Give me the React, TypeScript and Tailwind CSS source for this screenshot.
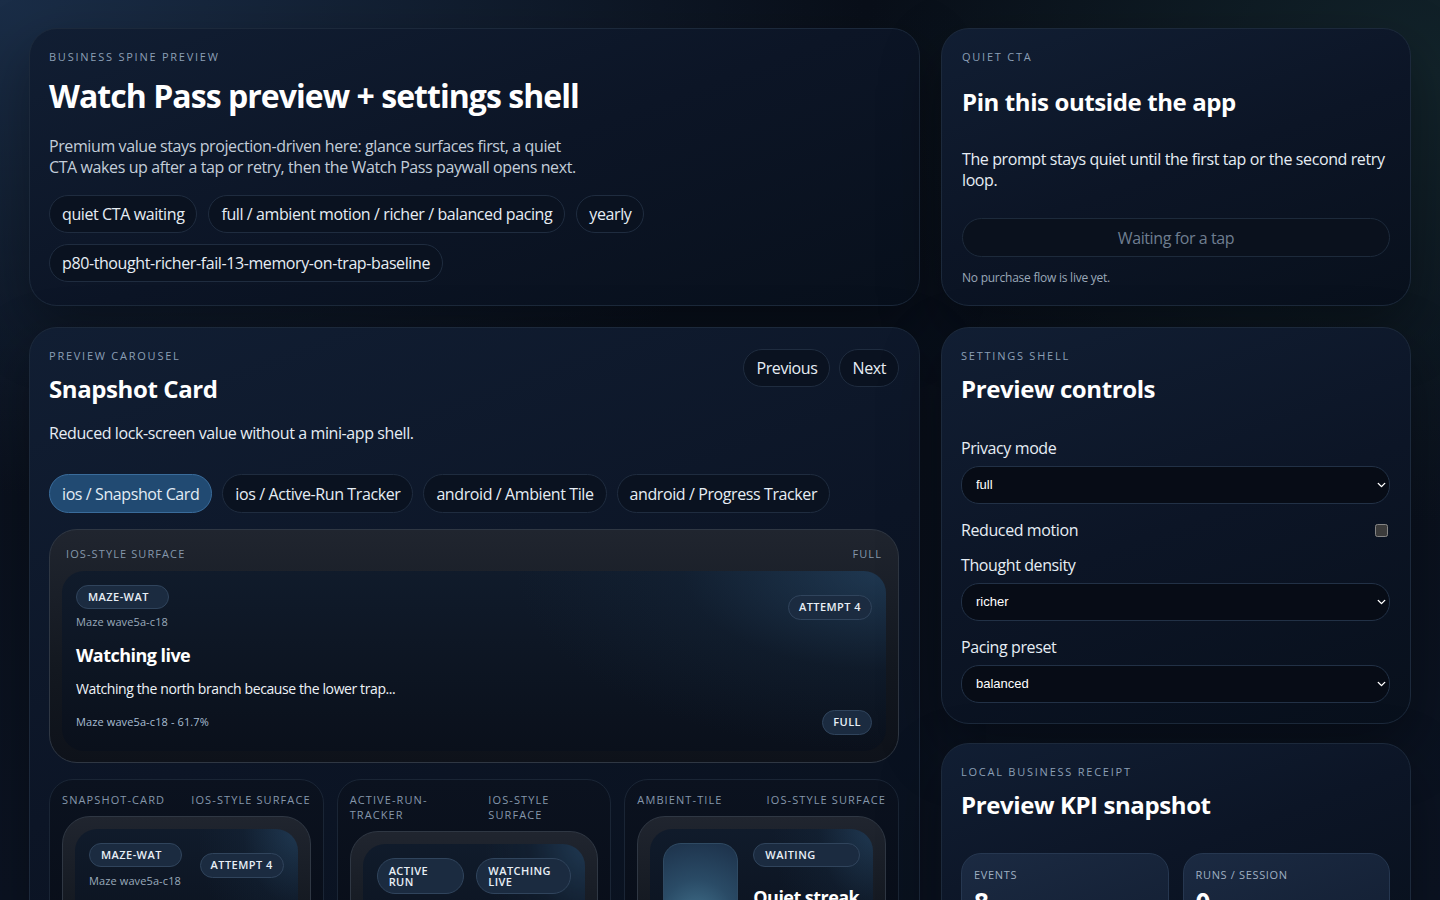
import React from 'react';
import { ChevronDown } from 'lucide-react';

const eyebrow = 'text-[11px] leading-4 uppercase tracking-[0.16em] text-[#8b9fb5]';
const miniLabel = 'text-[11px] leading-[15px] uppercase tracking-[0.1em] text-[#8597ab]';

function Panel({ className = '', children }: { className?: string; children: React.ReactNode }) {
  return (
    <section
      className={`rounded-[28px] border border-[#1c293b] bg-[linear-gradient(160deg,#111e33_0%,#0c1526_50%,#08101c_100%)] shadow-[0_24px_60px_rgba(0,0,0,0.35)] ${className}`}
    >
      {children}
    </section>
  );
}

function Pill({ children, active = false, tall = false }: { children: React.ReactNode; active?: boolean; tall?: boolean }) {
  return (
    <span
      className={`flex ${tall ? 'h-[39px]' : 'h-[38px]'} items-center rounded-full border px-[12px] text-[16px] ${
        active ? 'border-[#3a6c9b] bg-[#214a72] text-[#e3ecf5]' : 'border-[#1f2c3f] bg-[#0a1220] text-[#e6edf4]'
      }`}
    >
      {children}
    </span>
  );
}

function Tag({ children, className = '' }: { children: React.ReactNode; className?: string }) {
  return (
    <span
      className={`flex items-center rounded-full border border-[#30445c] bg-[#1b2b40] text-[11px] font-semibold tracking-[0.04em] text-[#e8eff6] ${className}`}
    >
      {children}
    </span>
  );
}

function Select({ value }: { value: string }) {
  return (
    <div className="relative mt-[7px]">
      <select
        defaultValue={value}
        className="h-[38px] w-full appearance-none rounded-[18px] border border-[#223146] bg-[#070c16] pl-[14px] pr-8 font-['Liberation_Sans',Arial,sans-serif] text-[13px] tracking-normal text-white outline-none"
      >
        <option value={value}>{value}</option>
      </select>
      <ChevronDown
        className="pointer-events-none absolute right-[2px] top-1/2 h-[13px] w-[13px] -translate-y-1/2 text-white"
        strokeWidth={2.6}
      />
    </div>
  );
}

const surfaceFrame =
  'rounded-[28px] border border-[#2f3743] bg-[linear-gradient(180deg,#20252f_0%,#131820_60%,#0e121a_100%)]';
const surfaceInner =
  'rounded-[22px] bg-[radial-gradient(ellipse_45%_100%_at_100%_0%,rgba(52,96,134,0.42)_0%,rgba(30,58,84,0.15)_55%,transparent_100%),linear-gradient(180deg,#101b2b_0%,#0a101b_100%)]';
const stripCard =
  'rounded-[24px] border border-[#1a2535] bg-[linear-gradient(180deg,#0b121f_0%,#070c16_100%)] px-[12px] pt-[12px]';

function SnapshotMini() {
  return (
    <div className={`${surfaceFrame} p-3`}>
      <div className={`${surfaceInner} h-[140px] px-[14px] pt-[14px]`}>
        <div className="flex items-center justify-between">
          <div>
            <Tag className="h-[24px] w-[93px] pl-[11px]">MAZE-WAT</Tag>
            <p className="mt-[7px] text-[11px] leading-[14px] tracking-[0.01em] text-[#9aaabb]">Maze wave5a-c18</p>
          </div>
          <Tag className="h-[25px] px-[10px]">ATTEMPT 4</Tag>
        </div>
        <p className="mt-3 text-[18px] font-bold leading-6 tracking-[-0.03em] text-white">Watching live</p>
      </div>
    </div>
  );
}

function TrackerMini() {
  return (
    <div className={`${surfaceFrame} p-3`}>
      <div className={`${surfaceInner} h-[140px] px-[14px] pt-[14px]`}>
        <div className="flex justify-between gap-3">
          <Tag className="w-[87px] px-[11px] py-[6px] leading-[11px]">ACTIVE RUN</Tag>
          <Tag className="w-[95px] px-[11px] py-[6px] leading-[11px]">WATCHING LIVE</Tag>
        </div>
      </div>
    </div>
  );
}

function AmbientMini() {
  return (
    <div className={`${surfaceFrame} p-3`}>
      <div className={`${surfaceInner} flex h-[140px] gap-[15px] px-[13px] pt-[14px]`}>
        <div className="h-[100px] w-[75px] shrink-0 rounded-[18px] border border-[#2f4a63] bg-[radial-gradient(circle_at_45%_75%,#41708b_0%,#2a4b66_45%,#1c3049_100%)]" />
        <div className="min-w-0 flex-1">
          <Tag className="h-[24px] w-full pl-[11px]">WAITING</Tag>
          <p className="mt-[18px] whitespace-nowrap text-[18px] font-bold leading-6 tracking-[-0.03em] text-white">Quiet streak</p>
        </div>
      </div>
    </div>
  );
}

export default function App() {
  const chips = ['quiet CTA waiting', 'full / ambient motion / richer / balanced pacing', 'yearly', 'p80-thought-richer-fail-13-memory-on-trap-baseline'];
  const tabs = ['ios / Snapshot Card', 'ios / Active-Run Tracker', 'android / Ambient Tile', 'android / Progress Tracker'];

  return (
    <div className="h-screen w-full overflow-hidden bg-[radial-gradient(ellipse_60%_55%_at_0%_0%,#1a2d47_0%,transparent_100%),radial-gradient(ellipse_40%_50%_at_100%_8%,#12232a_0%,transparent_100%),linear-gradient(180deg,#090f19_0%,#0b1322_100%)] px-[29px] pt-[28px] font-['Open_Sans',sans-serif] tracking-[-0.025em] text-[#e6edf4]">
      <div className="grid grid-cols-[891px_470px] gap-x-[21px] gap-y-[21px]">
        {/* hero */}
        <Panel className="pb-[22px] pl-[19px] pr-5 pt-5">
          <p className={eyebrow}>Business spine preview</p>
          <h1 className="mt-[13px] text-[32px] font-bold leading-[36px] tracking-[-0.03em] text-white">
            Watch Pass preview + settings shell
          </h1>
          <p className="mt-[22px] max-w-[535px] text-[16px] leading-[21px] text-[#c2cdd9]">
            Premium value stays projection-driven here: glance surfaces first, a quiet CTA wakes up after a tap or retry, then the
            Watch Pass paywall opens next.
          </p>
          <div className="mt-[17px] flex flex-wrap gap-[11px]">
            {chips.map((c) => (
              <Pill key={c}>{c}</Pill>
            ))}
          </div>
        </Panel>

        {/* quiet cta */}
        <Panel className="flex flex-col px-5 pb-[19px] pt-5">
          <p className={eyebrow}>Quiet CTA</p>
          <h2 className="mt-[22px] text-[24px] font-bold leading-[30px] text-white">Pin this outside the app</h2>
          <p className="mt-[32px] text-[16px] leading-[21px] text-[#e6edf4]">
            The prompt stays quiet until the first tap or the second retry loop.
          </p>
          <button className="mt-[27px] h-[39px] w-full rounded-full border border-[#1d2a3b] bg-[#0a111d] text-[16px] text-[#6f7e90]">
            Waiting for a tap
          </button>
          <p className="mt-[13px] text-[12px] leading-4 tracking-[-0.02em] text-[#9aa8b8]">No purchase flow is live yet.</p>
        </Panel>

        {/* carousel */}
        <Panel className="pl-[19px] pr-5 pt-5">
          <div className="flex items-start justify-between">
            <div>
              <p className={eyebrow}>Preview carousel</p>
              <h2 className="mt-[10px] text-[24px] font-bold leading-[30px] text-white">Snapshot Card</h2>
            </div>
            <div className="mt-[1px] flex gap-[9px]">
              <Pill>Previous</Pill>
              <Pill>Next</Pill>
            </div>
          </div>
          <p className="mt-[19px] text-[16px] leading-[21px] text-[#e6edf4]">Reduced lock-screen value without a mini-app shell.</p>
          <div className="mt-[30px] flex flex-wrap gap-[10px]">
            {tabs.map((t, i) => (
              <Pill key={t} active={i === 0} tall>
                {t}
              </Pill>
            ))}
          </div>

          {/* main surface */}
          <div className={`${surfaceFrame} mt-4 px-3 pb-[11px]`}>
            <div className="flex justify-between px-[4px] pt-4">
              <span className={miniLabel}>iOS-style surface</span>
              <span className={miniLabel}>Full</span>
            </div>
            <div className={`${surfaceInner} mt-[10px] px-[14px] pb-[16px] pt-[14px]`}>
              <div className="flex items-center justify-between">
                <div>
                  <Tag className="h-[24px] w-[93px] pl-[11px]">MAZE-WAT</Tag>
                  <p className="mt-[6px] text-[11px] leading-[14px] tracking-[0.01em] text-[#9aaabb]">Maze wave5a-c18</p>
                </div>
                <Tag className="h-[25px] px-[10px]">ATTEMPT 4</Tag>
              </div>
              <p className="mt-[14px] text-[18px] font-bold leading-6 tracking-[-0.03em] text-white">Watching live</p>
              <p className="mt-[12px] text-[14px] leading-5 text-[#eef3f8]">Watching the north branch because the lower trap...</p>
              <div className="mt-[11px] flex items-center justify-between">
                <span className="text-[11px] tracking-[0.01em] text-[#a8bdd2]">Maze wave5a-c18 - 61.7%</span>
                <Tag className="h-[25px] px-[10px] font-medium">FULL</Tag>
              </div>
            </div>
          </div>

          {/* surface strip */}
          <div className="mt-4 grid grid-cols-3 gap-[13px]">
            <div className={stripCard}>
              <div className="flex justify-between gap-3">
                <span className={miniLabel}>snapshot-card</span>
                <span className={miniLabel}>iOS-style surface</span>
              </div>
              <div className="mt-[9px]">
                <SnapshotMini />
              </div>
            </div>
            <div className={stripCard}>
              <div className="flex justify-between gap-3">
                <span className={`${miniLabel} max-w-[110px]`}>active-run-tracker</span>
                <span className={`${miniLabel} max-w-[110px]`}>iOS-style surface</span>
              </div>
              <div className="mt-[9px]">
                <TrackerMini />
              </div>
            </div>
            <div className={stripCard}>
              <div className="flex justify-between gap-3">
                <span className={miniLabel}>ambient-tile</span>
                <span className={miniLabel}>iOS-style surface</span>
              </div>
              <div className="mt-[9px]">
                <AmbientMini />
              </div>
            </div>
          </div>
        </Panel>

        {/* right stack */}
        <div className="flex flex-col gap-[19px]">
          <Panel className="pb-[20px] pl-[19px] pr-5 pt-5">
            <p className={eyebrow}>Settings shell</p>
            <h2 className="mt-[10px] text-[24px] font-bold leading-[30px] text-white">Preview controls</h2>

            <p className="mt-[33px] text-[16px] leading-[22px]">Privacy mode</p>
            <Select value="full" />

            <label className="mt-[15px] flex items-center justify-between text-[16px] leading-[22px]">
              Reduced motion
              <input type="checkbox" className="mr-[2px] h-[13px] w-[13px] scheme-dark" />
            </label>

            <p className="mt-[13px] text-[16px] leading-[22px]">Thought density</p>
            <Select value="richer" />

            <p className="mt-[15px] text-[16px] leading-[22px]">Pacing preset</p>
            <Select value="balanced" />
          </Panel>

          <Panel className="pb-6 pl-[19px] pr-5 pt-5">
            <p className={eyebrow}>Local business receipt</p>
            <h2 className="mt-[10px] text-[24px] font-bold leading-[30px] text-white">Preview KPI snapshot</h2>
            <div className="mt-[33px] grid grid-cols-2 gap-[14px]">
              {[
                ['Events', '8'],
                ['Runs / session', '0'],
              ].map(([k, v]) => (
                <div
                  key={k}
                  className="rounded-[20px] border border-[#263750] bg-[linear-gradient(160deg,#1b2a42_0%,#131f33_100%)] px-3 pb-4 pt-[13px]"
                >
                  <p className="text-[11px] leading-[15px] uppercase tracking-[0.06em] text-[#9fb0c2]">{k}</p>
                  <p className="mt-1 text-[26px] font-bold leading-8 text-white">{v}</p>
                </div>
              ))}
            </div>
          </Panel>
        </div>
      </div>
    </div>
  );
}
